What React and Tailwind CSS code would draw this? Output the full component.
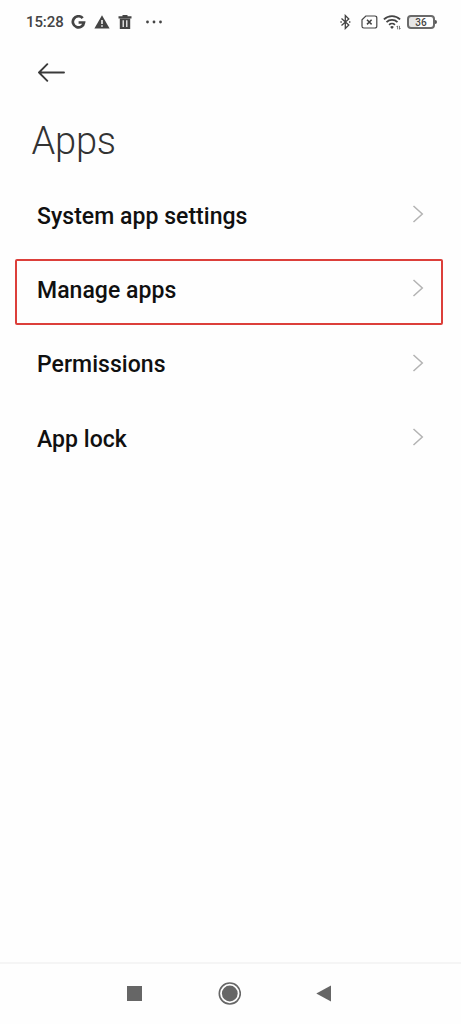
import React from 'react';

const menuItems = [
  { label: 'System app settings' },
  { label: 'Manage apps', highlighted: true },
  { label: 'Permissions' },
  { label: 'App lock' },
];

const StatusBar = () => (
  <div className="flex h-11 items-center justify-between pl-[26px] pr-[24px] text-[#444]">
    <div className="flex items-center">
      <span className="w-[37px] pt-px text-[15px] font-medium leading-none tracking-[-0.1px]">15:28</span>
      {/* Google */}
      <svg className="ml-[8px]" width="15" height="14" viewBox="0 0 15 14" fill="none" stroke="currentColor" strokeWidth="2.7">
        <path d="M11.7 3.2A5.6 5.6 0 1 0 13 7.5H7.6" />
      </svg>
      {/* Warning */}
      <svg className="ml-[8px]" width="16" height="14" viewBox="0 0 16 14">
        <path d="M8 .2 15.6 13.5H.4z" fill="currentColor" />
        <path d="M8 5v4M8 10.2v1.6" stroke="#fff" strokeWidth="1.5" />
      </svg>
      {/* Trash */}
      <svg className="ml-[8px]" width="14" height="14" viewBox="0 0 14 14">
        <path d="M4.5 0h5v1.2h4v2.3H.5V1.2h4zM1.8 3.8h10.4V14H1.8z" fill="currentColor" />
        <path d="M5.2 5.3v6.8M8.8 5.3v6.8" stroke="#fff" strokeWidth="1.2" />
      </svg>
      <svg className="ml-[13px]" width="18" height="4" viewBox="0 0 18 4" fill="currentColor">
        <circle cx="2.5" cy="2" r="1.4" />
        <circle cx="9" cy="2" r="1.4" />
        <circle cx="15.5" cy="2" r="1.4" />
      </svg>
    </div>

    <div className="flex items-center">
      {/* Bluetooth */}
      <svg width="11" height="16" viewBox="0 0 11 16" fill="none" stroke="currentColor" strokeWidth="1.3">
        <path d="M1.5 4.5 8.8 11 5.3 14.5V1.5L8.8 5 1.5 11.5" />
        <path d="M.4 8h1.4M9 8h1.4" strokeWidth="1.5" />
      </svg>
      {/* No SIM */}
      <svg className="ml-[10px]" width="17" height="14" viewBox="0 0 17 14" fill="none" stroke="currentColor">
        <path d="M4.8 1H14a1.8 1.8 0 0 1 1.8 1.8v8.4A1.8 1.8 0 0 1 14 13H2.8A1.8 1.8 0 0 1 1 11.2V4.8z" strokeWidth="1.2" />
        <path d="m6 4.8 4.6 4.6M10.6 4.8 6 9.4" strokeWidth="1.5" />
      </svg>
      {/* Wifi */}
      <svg className="ml-[5px]" width="20" height="16" viewBox="0 0 20 16" fill="none" stroke="currentColor">
        <path d="M.9 5.4a11.6 11.6 0 0 1 16.2 0M3.5 8.1a7.9 7.9 0 0 1 11 0M6.1 10.8a4.2 4.2 0 0 1 5.8 0" strokeWidth="1.8" />
        <path d="M9 14.9 7.1 13a2.7 2.7 0 0 1 3.8 0z" fill="currentColor" stroke="none" />
        <path d="M14.6 15.3v-3.4l-1 1.1M16.5 11.9v3.4l1-1.1" strokeWidth=".7" />
      </svg>
      {/* Battery */}
      <div className="ml-[4px] flex h-[14px] w-[28px] items-center justify-center rounded-[4px] border-2 border-[#6a6a6a] bg-[linear-gradient(to_right,#e6e6e6_36%,#fff_36%)] pt-px text-[10px] font-medium leading-none">
        36
      </div>
      <span className="h-[4px] w-[2px] rounded-r-sm bg-[#555]" />
    </div>
  </div>
);

const MenuRow = ({ label, highlighted }) => (
  <li className="relative flex h-[74.3px] items-center justify-between pl-[37px] pr-[37px]">
    <span className="pt-[2px] text-[23px] font-medium leading-none tracking-[0.04px] text-[#101010]">{label}</span>
    <svg className="mb-[2px]" width="12" height="18" viewBox="0 0 12 18" fill="none" stroke="#b3b3b3" strokeWidth="1.5">
      <path d="m1.5 1 8.8 8-8.8 8" />
    </svg>
    {highlighted && (
      <div className="absolute left-[15px] right-[18px] top-[7px] h-[66px] rounded-[2px] border-2 border-[#dc3f3a]" />
    )}
  </li>
);

const NavigationBar = () => (
  <nav className="flex h-[62px] items-center justify-between border-t-2 border-[#f5f5f5] pb-px pl-[127px] pr-[130px] text-[#666]">
    <button aria-label="Recent apps" className="size-[15px] bg-[#666]" />
    <button aria-label="Home">
      <svg width="23" height="23" viewBox="0 0 23 23">
        <circle cx="11.8" cy="11.5" r="10.5" fill="none" stroke="currentColor" strokeWidth="1.6" />
        <circle cx="11.8" cy="11.5" r="7.9" fill="currentColor" />
      </svg>
    </button>
    <button aria-label="Back">
      <svg width="15" height="17" viewBox="0 0 15 17" fill="currentColor">
        <path d="M15 .5v16L.3 8.5z" />
      </svg>
    </button>
  </nav>
);

const App = () => {
  return (
    <div className="flex h-screen w-full flex-col bg-[#fefefe] font-[Roboto,sans-serif]">
      <StatusBar />
      <header>
        <button aria-label="Go back" className="ml-[37px] mt-[19px] block">
          <svg width="28" height="19" viewBox="0 0 28 19" fill="none" stroke="#3a3a3a" strokeWidth="1.9" strokeLinecap="round" strokeLinejoin="round">
            <path d="M27 9.5H2M10.3 1.2 2 9.5l8.3 8.3" />
          </svg>
        </button>
        <h1 className="ml-[31.5px] mt-[38px] h-[58px] text-[38px] font-light leading-[42px] tracking-[-0.2px] text-[#333]">Apps</h1>
      </header>
      <ul className="flex-1">
        {menuItems.map((item) => (
          <MenuRow key={item.label} label={item.label} highlighted={item.highlighted} />
        ))}
      </ul>
      <NavigationBar />
    </div>
  );
};

export default App;
